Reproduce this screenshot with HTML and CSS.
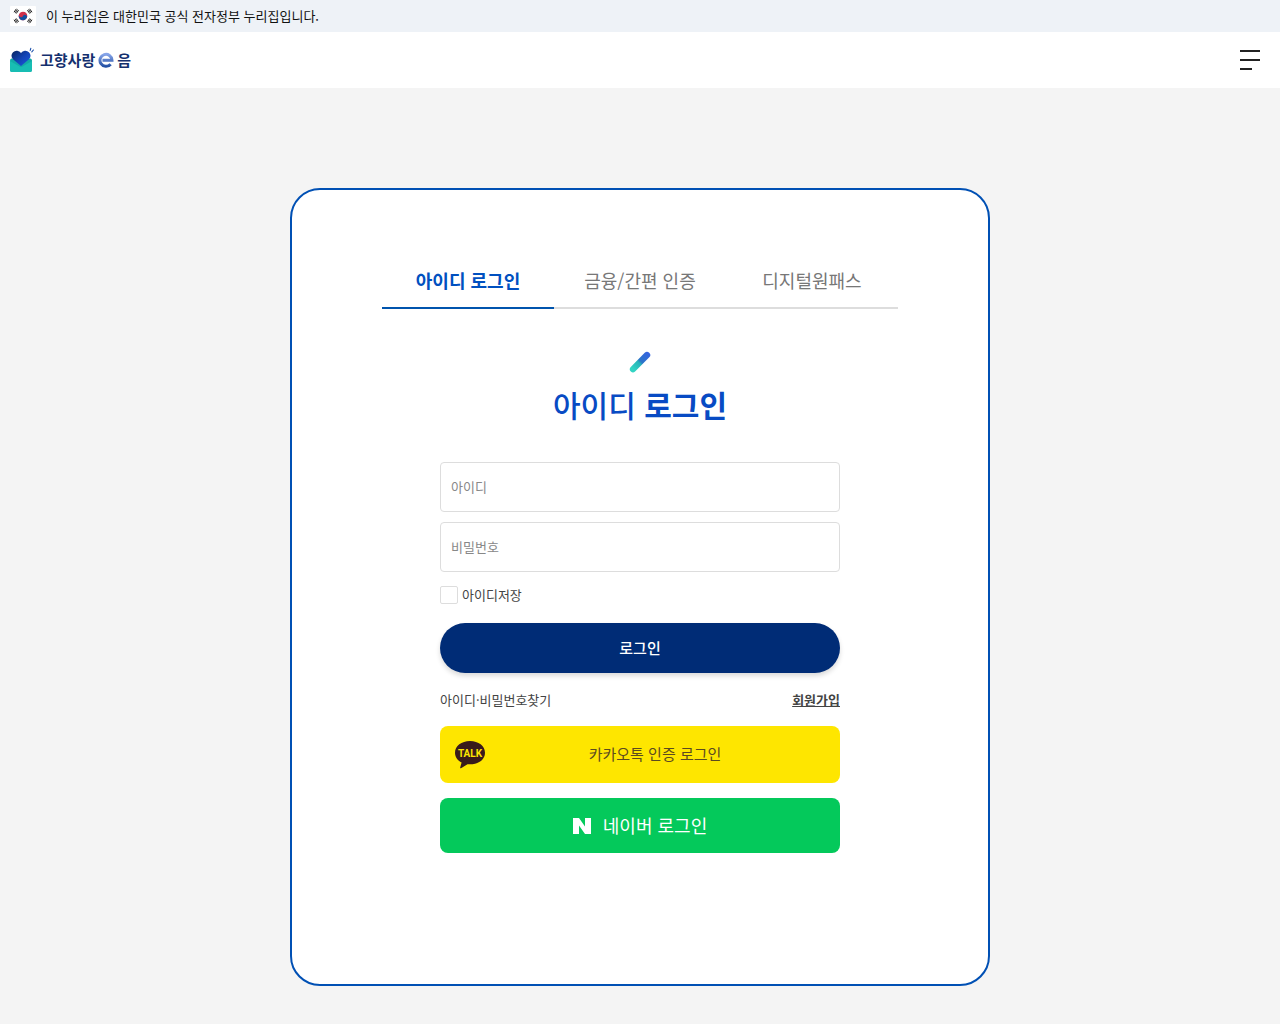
FILE: index.html
```html
<!DOCTYPE html>
<html lang="ko">
<head>
  <meta charset="UTF-8">
  <meta name="viewport" content="width=device-width, initial-scale=1.0">
  <title>고향사랑e음 로그인</title>
  <link rel="stylesheet" href="styles.css">
</head>
<body>
  <div class="gov-bar">
    <svg class="flag" viewBox="0 0 26 20" aria-hidden="true">
      <rect width="26" height="20" rx="1" fill="#fff"/>
      <g transform="rotate(25 13 10)">
        <circle cx="13" cy="10" r="4.3" fill="#d0304a"/>
        <path d="M8.7 10a2.15 2.15 0 0 0 4.3 0a2.15 2.15 0 0 1 4.3 0a4.3 4.3 0 0 1-8.6 0z" fill="#1450a0"/>
      </g>
      <g stroke="#222" stroke-width="1">
        <path d="M4 6.2l2.4-3.4M5.1 6.9l2.4-3.4M6.2 7.6l2.4-3.4"/>
        <path d="M22 13.8l-2.4 3.4M20.9 13.1l-2.4 3.4M19.8 12.4l-2.4 3.4"/>
        <path d="M22 6.2l-2.4-3.4M20.9 6.9l-2.4-3.4M19.8 7.6l-2.4-3.4"/>
        <path d="M4 13.8l2.4 3.4M5.1 13.1l2.4 3.4M6.2 12.4l2.4 3.4"/>
      </g>
    </svg>
    <span>이 누리집은 대한민국 공식 전자정부 누리집입니다.</span>
  </div>

  <header class="header">
    <a href="#" class="logo">
      <svg class="logo-mark" viewBox="0 0 24 26" aria-hidden="true">
        <defs>
          <linearGradient id="heart" x1="0" y1="0" x2="1" y2="1">
            <stop offset="0" stop-color="#08245e"/>
            <stop offset="0.5" stop-color="#1243b4"/>
            <stop offset="1" stop-color="#1d5ae0"/>
          </linearGradient>
        </defs>
        <path d="M0 13.5Q0 12 1.5 11.5H20.5Q22 12 22 13.5V23Q22 25 20 25H2Q0 25 0 23z" fill="#12aaa6"/>
        <path d="M11 19L3 12.2A5.3 5.3 0 0 1 3 5.2A5.2 5.2 0 0 1 11 6A5.2 5.2 0 0 1 19 5.2A5.3 5.3 0 0 1 19 12.2z" fill="url(#heart)"/>
        <path d="M0 14L9.5 19.5Q11 20.3 12.5 19.5L22 14V23Q22 25 20 25H2Q0 25 0 23z" fill="#18bdb3"/>
        <path d="M20.2 3.4L20.8 1.4M21.8 4.8L23.4 3" stroke="#174da8" stroke-width="1.1" stroke-linecap="round"/>
      </svg>
      <span class="logo-text">고향사랑</span>
      <svg class="logo-e" viewBox="0 0 16 16" role="img" aria-label="e">
        <defs>
          <linearGradient id="ering" x1="0" y1="0" x2="0" y2="1">
            <stop offset="0" stop-color="#86a4e8"/>
            <stop offset="1" stop-color="#2451a5"/>
          </linearGradient>
        </defs>
        <path d="M4.5 8.2H14A6 6 0 1 0 12.6 12.2" fill="none" stroke="url(#ering)" stroke-width="3"/>
      </svg>
      <span class="logo-text">음</span>
    </a>
    <button type="button" class="menu-btn" aria-label="메뉴">
      <span></span>
      <span></span>
      <span class="short"></span>
    </button>
  </header>

  <main class="main">
    <section class="login-card">
      <nav class="tabs">
        <a href="#" class="tab active">아이디 로그인</a>
        <a href="#" class="tab">금융/간편 인증</a>
        <a href="#" class="tab">디지털원패스</a>
      </nav>

      <svg class="title-mark" viewBox="0 0 22 22" aria-hidden="true">
        <defs>
          <linearGradient id="bar" x1="0" y1="1" x2="1" y2="0">
            <stop offset="0.15" stop-color="#32d4c3"/>
            <stop offset="0.46" stop-color="#27b3b9"/>
            <stop offset="0.54" stop-color="#2b75c8"/>
            <stop offset="0.9" stop-color="#3565df"/>
          </linearGradient>
        </defs>
        <path d="M1.5 16.2L15.7 1.8A3.2 3.2 0 0 1 20.3 6.3L6.1 20.6A3.2 3.2 0 0 1 1.5 16.2z" fill="url(#bar)"/>
      </svg>
      <h1 class="title">아이디 <strong>로그인</strong></h1>

      <form class="login-form">
        <input type="text" class="field" placeholder="아이디" aria-label="아이디">
        <input type="password" class="field" placeholder="비밀번호" aria-label="비밀번호">
        <div class="save-id">
          <input type="checkbox" id="saveId">
          <label for="saveId">아이디저장</label>
        </div>
        <button type="submit" class="login-btn">로그인</button>
        <div class="links">
          <a href="#">아이디·비밀번호찾기</a>
          <a href="#" class="join">회원가입</a>
        </div>
        <button type="button" class="social kakao">
          <svg class="talk" viewBox="0 0 30 28" aria-hidden="true">
            <path d="M15 0C6.5 0 0 5 0 11.7C0 16 2.6 19.5 6.6 21.6L5.2 26.4Q5 27.8 6.4 27L12.5 23.2C22 24.2 30 19.4 30 11.7C30 5 23.5 0 15 0z" fill="#391b1b"/>
            <text x="15" y="16" text-anchor="middle" class="talk-text">TALK</text>
          </svg>
          <span>카카오톡 인증 로그인</span>
        </button>
        <button type="button" class="social naver">
          <svg class="naver-n" viewBox="0 0 18 16" aria-hidden="true">
            <path d="M0 0H6L12 8.4V0H18V16H12L6 7.6V16H0z" fill="#fff"/>
          </svg>
          <span>네이버 로그인</span>
        </button>
      </form>
    </section>
  </main>
</body>
</html>
```

FILE: styles.css
```css
* {
  box-sizing: border-box;
}

body {
  margin: 0;
  font-family: "Noto Sans CJK KR", "Noto Sans", sans-serif;
  font-size: 13px;
  line-height: 20px;
  color: #444;
  background: #f4f4f4;
}

a {
  color: inherit;
  text-decoration: none;
}

button,
input {
  font-family: inherit;
}

button {
  border: none;
  cursor: pointer;
}

.gov-bar {
  display: flex;
  align-items: center;
  gap: 10px;
  height: 32px;
  padding: 0 10px;
  color: #111;
  background: #eef2f7;
}

.flag {
  width: 26px;
  height: 20px;
}

.header {
  display: flex;
  align-items: center;
  justify-content: space-between;
  height: 56px;
  padding: 0 20px 0 10px;
  background: #fff;
}

.logo {
  display: flex;
  align-items: center;
}

.logo-mark {
  width: 24px;
  height: 26px;
  margin-right: 6px;
}

.logo-text {
  font-size: 15px;
  font-weight: 700;
  color: #14306e;
}

.logo-e {
  width: 16px;
  height: 16px;
  margin: 0 3px;
}

.menu-btn {
  display: flex;
  flex-direction: column;
  gap: 7px;
  width: 20px;
  padding: 0;
  background: none;
}

.menu-btn span {
  width: 100%;
  height: 2px;
  background: #222;
}

.menu-btn .short {
  width: 60%;
}

.main {
  padding: 100px 20px 38px;
}

.login-card {
  max-width: 700px;
  margin: 0 auto;
  padding: 64px 90px 131px;
  text-align: center;
  background: #fff;
  border: 2px solid #0050b4;
  border-radius: 30px;
}

.tabs {
  display: flex;
}

.tab {
  flex: 1;
  padding: 13px 0 14px;
  font-size: 18px;
  line-height: 26px;
  color: #777;
  border-bottom: 2px solid #ddd;
}

.tab.active {
  font-weight: 700;
  color: #0050c0;
  border-bottom-color: #0054ad;
}

.title-mark {
  display: block;
  width: 22px;
  height: 22px;
  margin: 42px auto 10px;
}

.title {
  margin: 0;
  font-size: 30px;
  font-weight: 500;
  line-height: 42px;
  color: #084bc4;
}

.login-form {
  display: flex;
  flex-direction: column;
  max-width: 400px;
  margin: 37px auto 0;
}

.field {
  width: 100%;
  height: 50px;
  margin-bottom: 10px;
  padding: 0 10px 2px;
  font-size: 13px;
  color: #333;
  background: #fff;
  border: 1px solid #ddd;
  border-radius: 4px;
}

.field::placeholder {
  color: #888;
}

.save-id {
  display: flex;
  align-items: center;
  gap: 4px;
  height: 26px;
}

.save-id input {
  appearance: none;
  width: 18px;
  height: 18px;
  margin: 0;
  background: #fff;
  border: 1px solid #ddd;
  border-radius: 2px;
}

.save-id input:checked {
  background: #002c76;
}

.login-btn {
  height: 50px;
  margin-top: 15px;
  padding: 0 0 2px;
  font-size: 15px;
  font-weight: 500;
  color: #fff;
  background: #002c76;
  border-radius: 25px;
  box-shadow: 0 3px 5px rgba(0, 0, 0, 0.15);
}

.links {
  display: flex;
  justify-content: space-between;
  margin: 17px 0 16px;
}

.join {
  font-weight: 700;
  text-decoration: underline;
}

.social {
  display: flex;
  align-items: center;
  padding: 0 15px;
  border-radius: 8px;
}

.social span {
  padding-bottom: 2px;
}

.kakao {
  height: 57px;
  font-size: 15px;
  color: #5b4a20;
  background: #fee600;
}

.kakao span {
  flex: 1;
}

.talk {
  width: 30px;
  height: 28px;
}

.talk-text {
  font-family: Roboto, sans-serif;
  font-size: 10px;
  font-weight: 700;
  fill: #fee600;
}

.naver {
  justify-content: center;
  gap: 12px;
  height: 55px;
  margin-top: 15px;
  font-size: 18px;
  color: #fff;
  background: #04c95b;
}

.naver-n {
  width: 18px;
  height: 16px;
}
```
